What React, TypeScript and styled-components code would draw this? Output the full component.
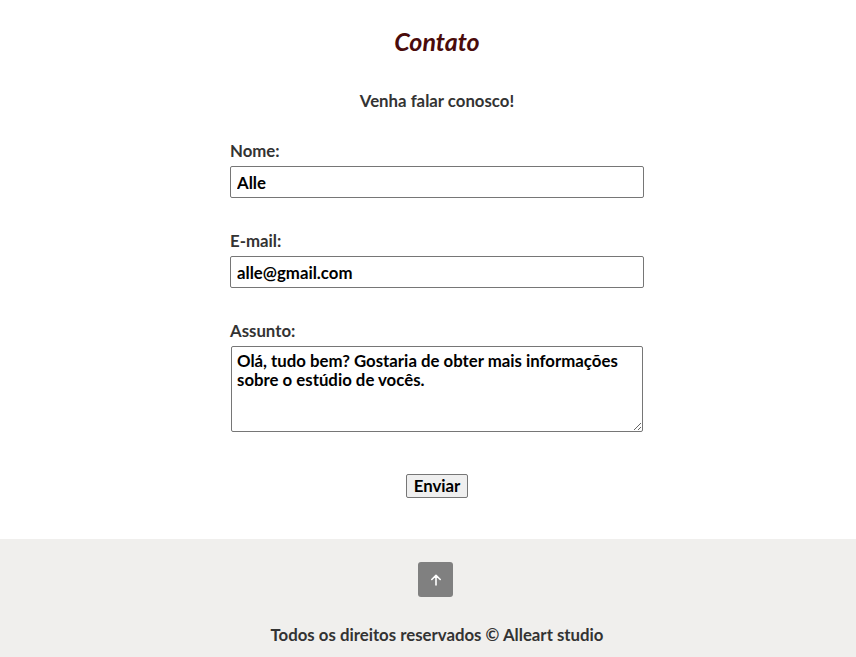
import styled, { createGlobalStyle } from "styled-components";

const GlobalStyle = createGlobalStyle`
  html, body {
    margin: 0;
    padding: 0;
    background: #fff;
    font-family: "Lato", "Noto Sans", sans-serif;
    color: #333;
  }
`;

const Main = styled.main`
  display: flex;
  flex-direction: column;
  align-items: center;
  padding: 25px 0 41px 18px;
`;

const Title = styled.h1`
  margin: 0;
  font-size: 25px;
  font-style: italic;
  font-weight: 700;
  color: #4a0b0b;
  line-height: 32px;
`;

const Subtitle = styled.p`
  margin: 34px 0 0;
  font-size: 16.8px;
  font-weight: 700;
  color: #333;
  line-height: 20px;
`;

const Form = styled.form`
  width: 414px;
  margin-top: 30px;
  display: flex;
  flex-direction: column;
  align-items: center;
`;

const Field = styled.div`
  width: 100%;
  display: flex;
  flex-direction: column;
  margin-bottom: 33px;
`;

const Label = styled.label`
  font-size: 16.8px;
  font-weight: 700;
  color: #333;
  line-height: 20px;
  margin-bottom: 5px;
`;

const Input = styled.input`
  box-sizing: border-box;
  width: 414px;
  height: 32px;
  padding: 0 6px;
  border: 1px solid #767676;
  border-radius: 2px;
  font-family: inherit;
  font-size: 16.8px;
  font-weight: 700;
  color: #000;
  outline: none;
`;

const TextArea = styled.textarea`
  box-sizing: border-box;
  width: 412px;
  height: 86px;
  margin-left: 1px;
  padding: 4px 5px;
  border: 1px solid #767676;
  border-radius: 2px;
  font-family: inherit;
  font-size: 16.8px;
  font-weight: 700;
  line-height: 19px;
  color: #000;
  outline: none;
`;

const SubmitButton = styled.button`
  box-sizing: border-box;
  height: 24px;
  padding: 0 7px;
  margin-top: 9px;
  border: 1px solid #767676;
  border-radius: 2px;
  background: #efefef;
  font-family: inherit;
  font-size: 16.8px;
  font-weight: 700;
  line-height: 20px;
  color: #000;
`;

const Footer = styled.footer`
  background: #f0efed;
  display: flex;
  flex-direction: column;
  align-items: center;
  padding: 23px 0 14px 18px;
`;

const TopButton = styled.button`
  width: 35px;
  height: 35px;
  margin-right: 3px;
  border: none;
  border-radius: 3px;
  background: #808080;
  display: flex;
  align-items: center;
  justify-content: center;
  padding: 0;
`;

const Copy = styled.p`
  margin: 28px 0 0;
  font-size: 16.8px;
  font-weight: 700;
  color: #333;
  line-height: 20px;
`;

export default function App() {
  return (
    <>
      <GlobalStyle />
      <Main>
        <Title>Contato</Title>
        <Subtitle>Venha falar conosco!</Subtitle>
        <Form onSubmit={(e) => e.preventDefault()}>
          <Field>
            <Label htmlFor="nome">Nome:</Label>
            <Input id="nome" type="text" defaultValue="Alle" />
          </Field>
          <Field>
            <Label htmlFor="email">E-mail:</Label>
            <Input id="email" type="email" defaultValue="alle@gmail.com" />
          </Field>
          <Field>
            <Label htmlFor="assunto">Assunto:</Label>
            <TextArea
              id="assunto"
              defaultValue="Olá, tudo bem? Gostaria de obter mais informações sobre o estúdio de vocês."
            />
          </Field>
          <SubmitButton type="submit">Enviar</SubmitButton>
        </Form>
      </Main>
      <Footer>
        <TopButton aria-label="Voltar ao topo">
          <svg width="12" height="12" viewBox="0 0 12 12" fill="none">
            <path
              d="M6 11V1.5M1.8 5.5L6 1.3l4.2 4.2"
              stroke="#fff"
              strokeWidth="1.6"
              strokeLinecap="round"
              strokeLinejoin="round"
            />
          </svg>
        </TopButton>
        <Copy>Todos os direitos reservados © Alleart studio</Copy>
      </Footer>
    </>
  );
}
